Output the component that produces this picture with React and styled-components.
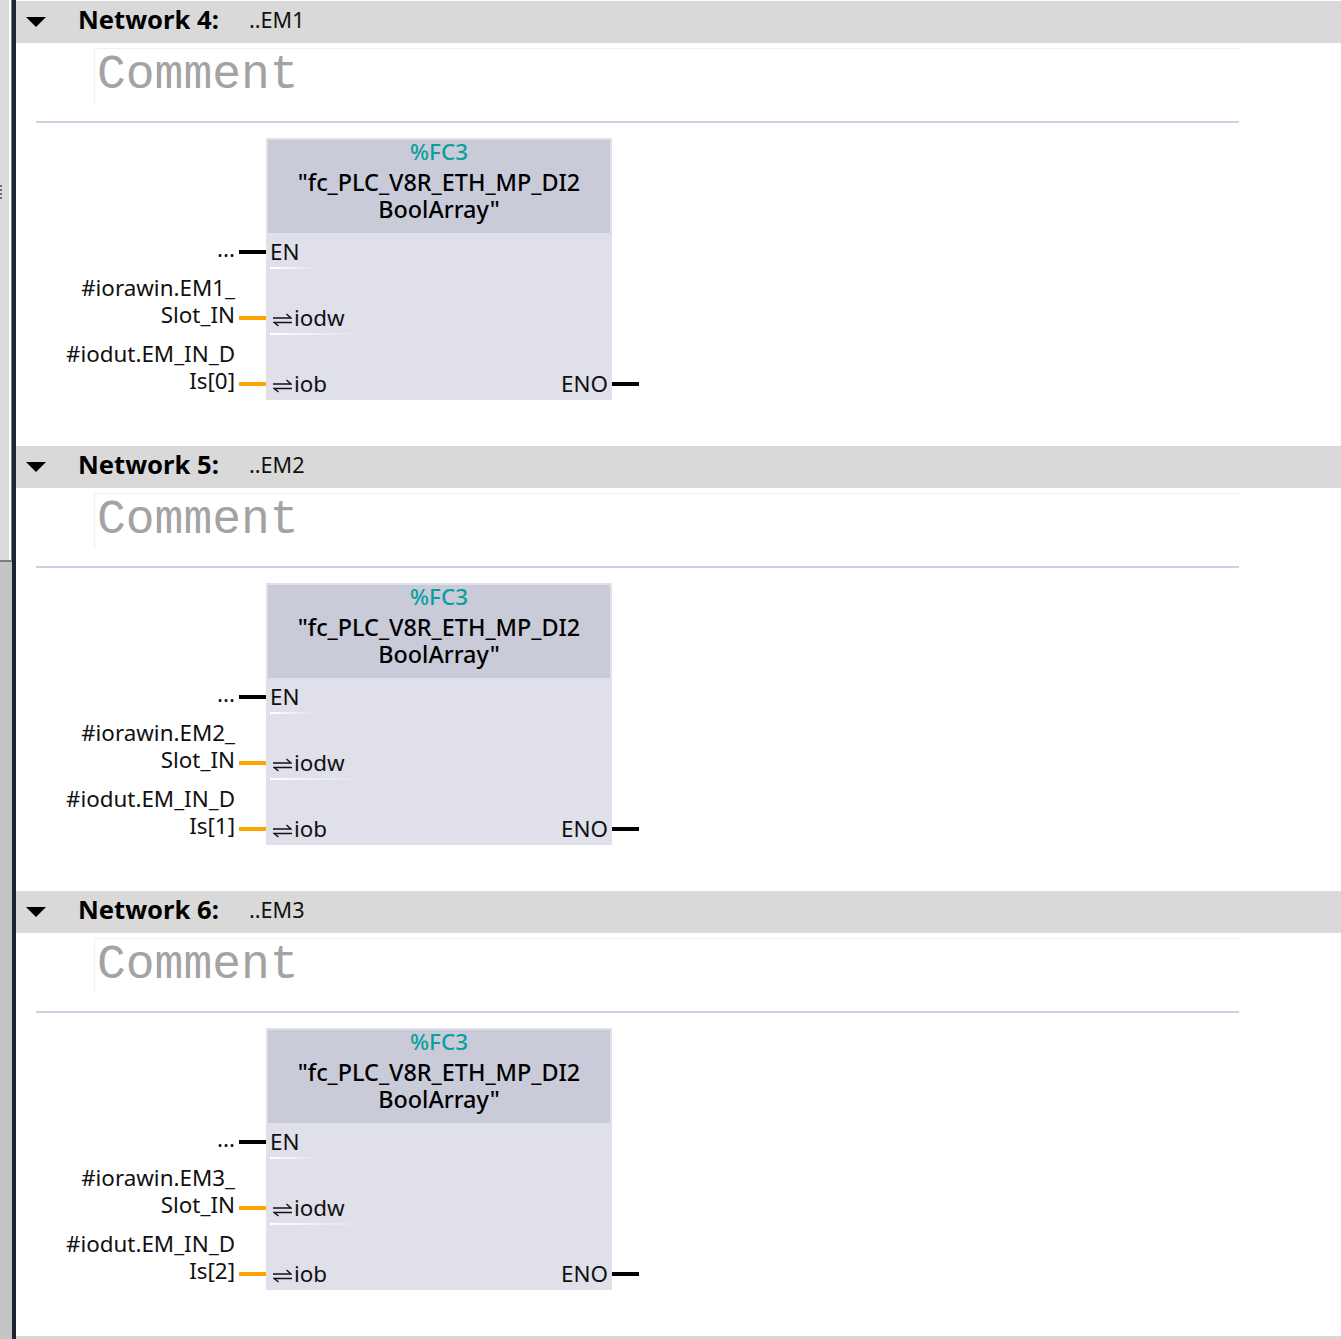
import React from 'react'
import styled, { createGlobalStyle } from 'styled-components'

const networks = [
    { id: 4, title: '..EM1', iorawin: ['#iorawin.EM1_', 'Slot_IN'], iodut: ['#iodut.EM_IN_D', 'Is[0]'] },
    { id: 5, title: '..EM2', iorawin: ['#iorawin.EM2_', 'Slot_IN'], iodut: ['#iodut.EM_IN_D', 'Is[1]'] },
    { id: 6, title: '..EM3', iorawin: ['#iorawin.EM3_', 'Slot_IN'], iodut: ['#iodut.EM_IN_D', 'Is[2]'] },
]

const InOutIcon = () => (
    <PinIcon width="19" height="14" viewBox="0 0 19 14">
        <path d="M0 5H18L13.5 1M19 9.5H1L5.5 13" fill="none" stroke="#111" strokeWidth="1.4" />
    </PinIcon>
)

const Input = ({ lines, color }) => (
    <InputRow>
        <InputLabel>
            {lines.map((l) => <div key={l}>{l}</div>)}
        </InputLabel>
        <Wire $color={color} />
    </InputRow>
)

const Network = ({ net }) => (
    <NetworkSection>
        <NetworkHeader>
            <Caret width="20" height="10" viewBox="0 0 20 10">
                <path d="M0 0H20L10 10Z" fill="#000" />
            </Caret>
            <NetworkName>Network {net.id}:</NetworkName>
            <NetworkTitle>{net.title}</NetworkTitle>
        </NetworkHeader>
        <CommentBox>Comment</CommentBox>
        <Divider />
        <Diagram>
            <InputColumn>
                <Input lines={['...']} color="#000" />
                <Input lines={net.iorawin} color="#ffa500" />
                <Input lines={net.iodut} color="#ffa500" />
            </InputColumn>
            <Block>
                <BlockHeader>
                    <BlockAddress>%FC3</BlockAddress>
                    <BlockName>"fc_PLC_V8R_ETH_MP_DI2</BlockName>
                    <BlockName>BoolArray"</BlockName>
                </BlockHeader>
                <PinRow $line={48}>
                    <span>EN</span>
                </PinRow>
                <PinRow $line={92}>
                    <PinName><InOutIcon />iodw</PinName>
                </PinRow>
                <PinRow>
                    <PinName><InOutIcon />iob</PinName>
                    <span>ENO</span>
                </PinRow>
            </Block>
            <OutputColumn>
                <Wire $color="#000" />
            </OutputColumn>
        </Diagram>
    </NetworkSection>
)

const App = () => (
    <>
        <GlobalStyle />
        <Page>
            <Sidebar>
                <SidePanes>
                    <TopPane>
                        <Grip /><Grip /><Grip /><Grip />
                    </TopPane>
                    <BottomPane />
                </SidePanes>
                <SideEdge />
            </Sidebar>
            <Main>
                {networks.map((n) => <Network key={n.id} net={n} />)}
                <BottomBar />
            </Main>
        </Page>
    </>
)

export default App

const GlobalStyle = createGlobalStyle`
    html, body {
        margin: 0;
        padding: 0;
        background: #fff;
        overflow: hidden;
    }
`

const Page = styled.div`
    display: flex;
    height: 100vh;
    font-family: "Noto Sans", "Open Sans", sans-serif;
    font-size: 22.4px;
    line-height: 27px;
    color: #111;
`

const Sidebar = styled.div`
    display: flex;
    flex: 0 0 16px;
`

const SidePanes = styled.div`
    display: flex;
    flex-direction: column;
    width: 12px;
`

const TopPane = styled.div`
    display: flex;
    flex-direction: column;
    gap: 2px;
    box-sizing: border-box;
    height: 562px;
    padding-top: 185px;
    background: #dcdcdc;
    border-right: 1px solid #7d7d7d;
    border-bottom: 2px solid #7d7d7d;
    box-shadow: inset -2px 0 0 #fff;
`

const Grip = styled.div`
    width: 2px;
    height: 2px;
    background: #6e6e6e;
`

const BottomPane = styled.div`
    flex: 1;
    background: #c4c4c4;
`

const SideEdge = styled.div`
    width: 4px;
    background: #1d2433;
`

const Main = styled.div`
    flex: 1;
    display: flex;
    flex-direction: column;
    padding-top: 1px;
    min-width: 0;
`

const BottomBar = styled.div`
    height: 3px;
    background: #d9d9d9;
`

const NetworkSection = styled.section`
    flex: 0 0 445px;
`

const NetworkHeader = styled.div`
    display: flex;
    align-items: center;
    box-sizing: border-box;
    height: 42px;
    padding-bottom: 5px;
    background: #d9d9d9;
`

const Caret = styled.svg`
    margin: 5px 33px 0 10px;
`

const NetworkName = styled.span`
    width: 171px;
    margin-left: -1px;
    font-size: 25.6px;
    font-weight: 700;
    color: #000;
`

const NetworkTitle = styled.span`
    font-size: 21.6px;
    color: #111;
`

const CommentBox = styled.div`
    box-sizing: border-box;
    width: 1147px;
    height: 56px;
    margin: 5px 0 0 78px;
    padding: 3px 0 0 2px;
    border-top: 1px solid #f0f0f0;
    border-left: 1px solid #f0f0f0;
    font-family: "Liberation Mono", monospace;
    font-size: 48px;
    line-height: 47px;
    color: #a3a3a3;
`

const Divider = styled.div`
    width: 1203px;
    height: 2px;
    margin: 17px 0 15px 20px;
    background: #d0d0e4;
`

const Diagram = styled.div`
    display: flex;
    align-items: flex-end;
    height: 262px;
`

const InputColumn = styled.div`
    display: flex;
    flex-direction: column;
    width: 250px;
`

const InputRow = styled.div`
    display: flex;
    align-items: flex-end;
    justify-content: flex-end;
    height: 66px;
`

const InputLabel = styled.div`
    margin: 0 4px 6px 0;
    text-align: right;
    white-space: nowrap;
`

const Wire = styled.div`
    flex: 0 0 27px;
    width: 27px;
    height: 4px;
    margin-bottom: 14px;
    background: ${(p) => p.$color};
`

const Block = styled.div`
    display: flow-root;
    box-sizing: border-box;
    width: 346px;
    height: 262px;
    background: #dfe0ea;
`

const BlockHeader = styled.div`
    display: flow-root;
    box-sizing: border-box;
    height: 93px;
    margin: 2px 2px 0;
    background: #c9cbd9;
    text-align: center;
`

const BlockAddress = styled.div`
    height: 29px;
    margin-top: -2px;
    padding-bottom: 2px;
    color: #0a9f9f;
    font-weight: 500;
`

const BlockName = styled.div`
    font-size: 23.4px;
    font-weight: 500;
    color: #000;
`

const PinRow = styled.div`
    position: relative;
    display: flex;
    align-items: flex-end;
    justify-content: space-between;
    box-sizing: border-box;
    height: 66px;
    padding: 0 4px 4px 4px;

    &:nth-child(2) {
        height: 36px;
    }

    &:last-child {
        height: 65px;
        padding-bottom: 3px;
    }

    &::after {
        content: '';
        position: absolute;
        left: 4px;
        bottom: 0;
        width: ${(p) => p.$line || 0}px;
        height: 2px;
        background: linear-gradient(to right, #fff, rgba(255, 255, 255, 0));
    }
`

const PinName = styled.span`
    display: flex;
    align-items: center;
`

const PinIcon = styled.svg`
    margin: 5px 2px 0 3px;
`

const OutputColumn = styled.div`
    display: flex;
    align-items: flex-end;
    width: 27px;
`
